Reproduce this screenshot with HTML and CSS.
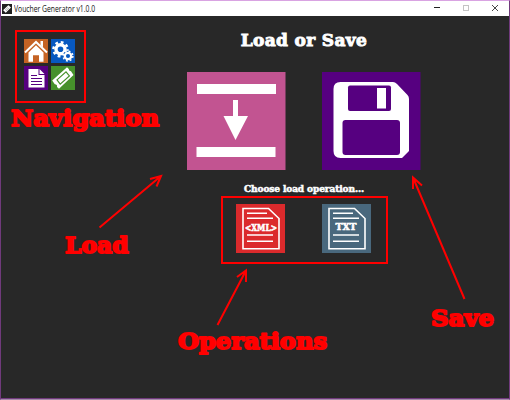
FILE: index.html
```
<!DOCTYPE html>
<html lang="en">
<head>
<meta charset="utf-8">
<title>Voucher Generator v1.0.0</title>
<link rel="stylesheet" href="styles.css">
</head>
<body>
<div class="window">
  <header class="titlebar">
    <svg class="app-icon" viewBox="0 0 10 10"><rect width="10" height="10" fill="#202020"/><path d="M1 6.2 6.3 1.2 7.2 1.8 8 2.7 9 3.5 3.8 8.8 2.8 8 2.2 7.1Z" fill="#fff"/><path d="M3 6.2 6.2 3.1M4 7 7.2 3.9" stroke="#777" stroke-width=".5"/></svg>
    <span class="app-name">Voucher Generator v1.0.0</span>
    <svg class="controls" viewBox="0 0 79 15"><path d="M4 6.500h6" stroke="#222"/><rect x="33.500" y="4.500" width="5" height="5" fill="none" stroke="#c4c4c4"/><path d="M62 4l6 6M68 4l-6 6" stroke="#333" stroke-width=".9"/></svg>
  </header>
  <div class="content">
    <nav class="nav">
      <svg class="tile" viewBox="0 0 24 24"><rect width="24" height="24" fill="#c56324"/><path d="M1 13.500 12 3 23 13.500" fill="none" stroke="#fff" stroke-width="2"/><path d="M16.500 2h2.500v6.500l-2.500-2.500ZM4.500 13.500 12 6.200l7.500 7.300v9.200h-4.500v-6.500h-6v6.500h-4.500Z" fill="#fff"/></svg>
      <svg class="tile" viewBox="0 0 24 24"><rect width="24" height="24" fill="#0758c0"/><circle cx="9.500" cy="10.300" r="4.500" fill="none" stroke="#fff" stroke-width="3.400"/><circle cx="9.500" cy="10.300" r="7.100" fill="none" stroke="#fff" stroke-width="2.400" stroke-dasharray="2.790 2.790"/><circle cx="17" cy="17" r="5.200" fill="#0758c0"/><circle cx="17" cy="17" r="3.200" fill="none" stroke="#fff" stroke-width="2.300"/><circle cx="17" cy="17" r="4.900" fill="none" stroke="#fff" stroke-width="1.500" stroke-dasharray="1.924 1.924"/></svg>
      <svg class="tile" viewBox="0 0 24 24"><rect width="24" height="24" fill="#560080"/><path d="M4.500 3h10v6h6v12.500h-16ZM15.500 3l5 5h-5Z" fill="#fff"/><path d="M7 9.500h6M7 12.500h11M7 15.500h11M7 18.500h11" stroke="#560080" stroke-width="1.100"/></svg>
      <svg class="tile" viewBox="0 0 24 24"><rect width="24" height="24" fill="#46912b"/><path d="M1.200 14.500 16 1.200 17.800 3Q17.500 5 20 5.200L22.500 9 8 22.800 6 20.900Q6.500 18.500 3.800 18.300Z" fill="#fff"/><path d="M6 13.900 15 5.900 18.400 9.900 9.200 18.100Z" fill="#fff" stroke="#46912b" stroke-width="1.200"/></svg>
    </nav>
    <main class="main">
      <h1 class="heading">Load or Save</h1>
      <div class="actions">
        <svg class="big" viewBox="0 0 99 98"><rect width="98.500" height="98" fill="#c25491"/><path d="M10 12h79v10H10ZM9.500 75h79v10h-79ZM46 28h5v16h10L48.500 68 36.500 44H46Z" fill="#fff"/></svg>
        <svg class="big" viewBox="0 0 99 98"><rect width="98.500" height="98" fill="#560080"/><path d="M18.500 10H71Q73 10 75 12L85.500 23Q87 24.500 87 27V79L80 86H18.500Q11.500 86 11.500 79V17Q11.500 10 18.500 10Z" fill="#fff"/><rect x="26" y="13.500" width="43" height="25.500" rx="2" fill="#560080"/><rect x="55" y="16" width="9" height="20.500" fill="#fff"/><rect x="20.500" y="48" width="57.500" height="35" rx="3" fill="#560080"/></svg>
      </div>
      <h2 class="prompt">Choose load operation...</h2>
      <div class="operations">
        <svg class="small" viewBox="0 0 49 49"><rect width="49" height="49" fill="#db2a2c"/><g class="doc"><path d="M7 4.500H32.500L43 14.500V44.800H7Z"/><path d="M11 9.300H31M11 14.300H37M11 31H37M11 37.300H37"/></g><text class="label" x="9" y="26.800" textLength="32" lengthAdjust="spacingAndGlyphs">&lt;XML&gt;</text></svg>
        <svg class="small" viewBox="0 0 49 49"><rect width="49" height="49" fill="#49687d"/><g class="doc"><path d="M7 4.500H32.500L43 14.500V44.800H7Z"/><path d="M11 9.300H31M11 14.300H37M11 31H37M11 37.300H37"/></g><text class="label" x="13.500" y="26.300" textLength="21" lengthAdjust="spacingAndGlyphs">TXT</text></svg>
      </div>
    </main>
  </div>
</div>
<svg class="annotations" viewBox="0 0 510 400">
  <g class="mark">
    <rect x="16" y="31" width="69" height="71"/>
    <rect x="222" y="197" width="165" height="66"/>
    <path d="M99.500 227.500 161 176M150 179l11-3-4.500 10.500"/>
    <path d="M217.500 325 246 270.500M237 277l9-6.500v11.500"/>
    <path d="M464.500 299 413 177.500M413 189V177.500l9 8"/>
  </g>
  <g class="note">
    <text x="11" y="126" textLength="148" lengthAdjust="spacingAndGlyphs">Navigation</text>
    <text x="65" y="252.500" textLength="63.500" lengthAdjust="spacingAndGlyphs">Load</text>
    <text x="178" y="349" textLength="149" lengthAdjust="spacingAndGlyphs">Operations</text>
    <text x="431" y="326" textLength="63" lengthAdjust="spacingAndGlyphs">Save</text>
  </g>
</svg>
</body>
</html>
```
FILE: styles.css
```
* { box-sizing: border-box; }
body { margin: 0; background: #282828; }
svg { display: block; }
.window {
  width: 510px;
  height: 400px;
  display: flex;
  flex-direction: column;
  background: #282828;
  border: 1px solid #703a7c;
  border-top-color: #d9a3e2;
  border-bottom-color: #a78bab;
}
.titlebar {
  height: 15px;
  flex: none;
  display: flex;
  align-items: center;
  padding-left: 1px;
  background: #fff;
}
.app-icon { width: 10px; height: 10px; }
.app-name {
  margin-left: 2px;
  font: 8.5px/14px "Open Sans", "Noto Sans", sans-serif;
  color: #111;
  white-space: nowrap;
  transform: scaleX(0.8);
  transform-origin: left center;
}
.controls { width: 79px; height: 15px; margin-left: auto; }
.content {
  flex: 1;
  display: flex;
  align-items: flex-start;
  border-bottom: 1px solid #703a7c;
}
.nav {
  display: grid;
  grid-template-columns: 24px 24px;
  gap: 3px;
  padding: 23px 0 0 23px;
}
.tile { width: 24px; height: 24px; }
.main {
  width: 234px;
  margin-left: 112px;
  padding-top: 14px;
  display: flex;
  flex-direction: column;
  align-items: center;
}
.heading, .prompt {
  margin: 0;
  color: #fff;
  font-family: "DejaVu Serif", serif;
  font-weight: bold;
  white-space: nowrap;
}
.heading {
  font-size: 17px;
  line-height: 20px;
  letter-spacing: 0.35px;
  -webkit-text-stroke: 0.9px #fff;
}
.actions { display: flex; gap: 36px; margin-top: 22px; }
.big { width: 99px; height: 98px; }
.prompt {
  font-size: 9px;
  line-height: 12px;
  margin-top: 13px;
  letter-spacing: -0.1px;
  -webkit-text-stroke: 0.5px #fff;
}
.operations { display: flex; gap: 37px; margin-top: 9px; padding-right: 2px; }
.small { width: 49px; height: 49px; }
.doc { fill: none; stroke: #fff; stroke-width: 1.6; }
.label {
  font: bold 9.5px "DejaVu Serif", serif;
  fill: #fff;
  stroke: #fff;
  stroke-width: 0.6px;
}
.annotations {
  position: absolute;
  left: 0;
  top: 0;
  width: 510px;
  height: 400px;
}
.mark { fill: none; stroke: #f00; stroke-width: 2; }
.note text {
  font: bold 23px "DejaVu Serif", serif;
  fill: #f00;
  stroke: #f00;
  stroke-width: 1.9px;
  stroke-linejoin: round;
}
```
